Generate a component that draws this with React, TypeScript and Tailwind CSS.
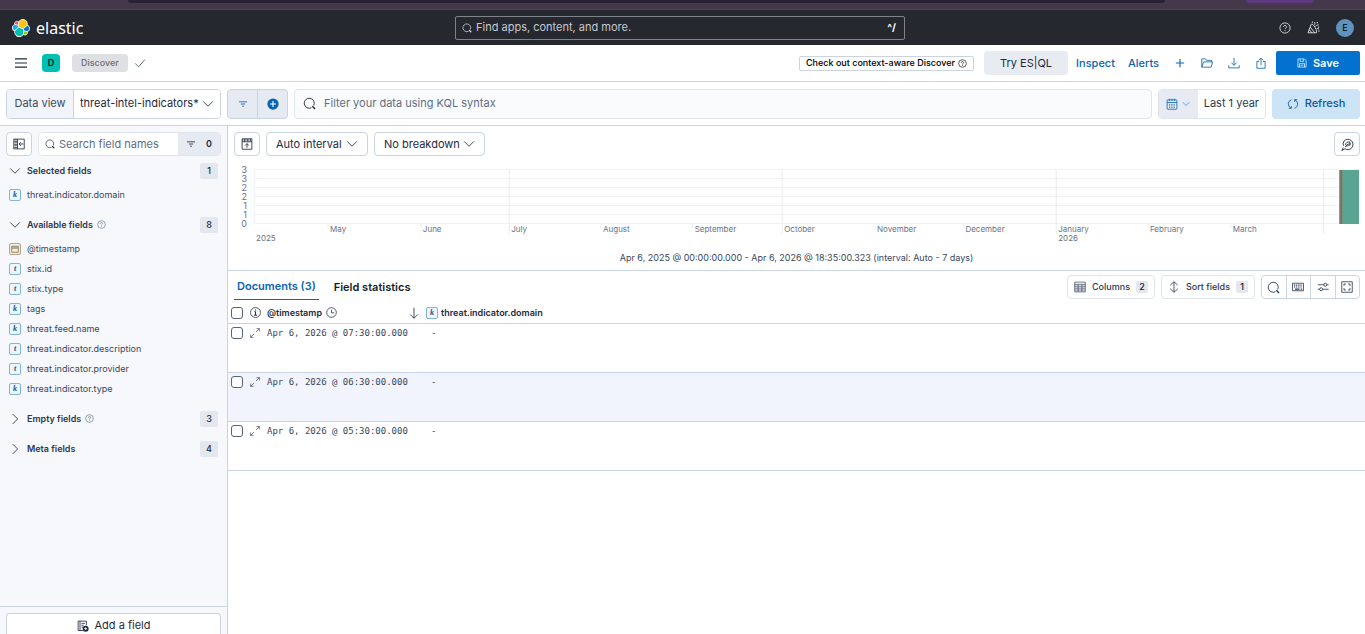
import { useState } from "react";
import type { ReactNode } from "react";

type FieldType = "k" | "t" | "date";

interface Field {
  name: string;
  type: FieldType;
}

const selectedFields: Field[] = [{ name: "threat.indicator.domain", type: "k" }];

const availableFields: Field[] = [
  { name: "@timestamp", type: "date" },
  { name: "stix.id", type: "t" },
  { name: "stix.type", type: "t" },
  { name: "tags", type: "k" },
  { name: "threat.feed.name", type: "k" },
  { name: "threat.indicator.description", type: "t" },
  { name: "threat.indicator.provider", type: "t" },
  { name: "threat.indicator.type", type: "k" },
];

const rows = [
  { timestamp: "Apr 6, 2026 @ 07:30:00.000", domain: "-" },
  { timestamp: "Apr 6, 2026 @ 06:30:00.000", domain: "-" },
  { timestamp: "Apr 6, 2026 @ 05:30:00.000", domain: "-" },
];

// x is the share of the time range, in percent
const months = [
  { x: 6.7, label: "May" },
  { x: 15.1, label: "June" },
  { x: 23.1, label: "July", quarter: true },
  { x: 31.4, label: "August" },
  { x: 39.7, label: "September" },
  { x: 47.8, label: "October", quarter: true },
  { x: 56.2, label: "November" },
  { x: 64.2, label: "December" },
  { x: 72.6, label: "January", year: "2026", quarter: true },
  { x: 80.9, label: "February" },
  { x: 88.4, label: "March" },
  { x: 96.8, label: "", quarter: true },
];

const yTicks = ["3", "3", "2", "2", "1", "1", "0"];

const Icon = ({ className = "size-3", children }: { className?: string; children: ReactNode }) => (
  <svg viewBox="0 0 16 16" fill="none" stroke="currentColor" strokeWidth="1.1" className={`shrink-0 ${className}`} aria-hidden="true">
    {children}
  </svg>
);

const ChevronDown = ({ className }: { className?: string }) => (
  <Icon className={className}><path d="M1.5 4.5 8 11l6.5-6.5" /></Icon>
);

const ChevronRight = ({ className }: { className?: string }) => (
  <Icon className={className}><path d="M5 1.5 11.5 8 5 14.5" /></Icon>
);

const SearchIcon = ({ className }: { className?: string }) => (
  <Icon className={className}>
    <path d="M10.5 13.2A6.2 6.2 0 1 1 13.2 10.5" />
    <path d="m11.5 11.5 3.3 3.3" strokeWidth="1.8" />
  </Icon>
);

const FilterIcon = ({ className }: { className?: string }) => (
  <Icon className={className}><path d="M1.5 4.5h13M4.5 8h7M6.5 11.5h3" strokeWidth="1.3" /></Icon>
);

const HelpIcon = ({ className }: { className?: string }) => (
  <Icon className={className}>
    <circle cx="8" cy="8" r="6.8" />
    <path d="M6 6.5a2 2 0 1 1 3 1.7c-.7.4-1 .7-1 1.5M8 11v1.4" />
  </Icon>
);

const InfoIcon = ({ className }: { className?: string }) => (
  <Icon className={className}>
    <circle cx="8" cy="8" r="7.2" />
    <path d="M6.2 6.8H8v5M5.8 11.8h4.4M8 3.6v1.6" strokeWidth="1.4" />
  </Icon>
);

const ClockIcon = ({ className }: { className?: string }) => (
  <Icon className={className}><circle cx="8" cy="8" r="7" /><path d="M8 4v4.5h4" /></Icon>
);

const CalendarIcon = ({ className }: { className?: string }) => (
  <Icon className={className}>
    <rect x="1.5" y="2.5" width="13" height="12.5" rx="1" />
    <path d="M1.5 6h13M4.5 1v3M8 1v3M11.500 1v3" />
    <path d="M4 8.5h8M4 10.5h8M4 12.5h8" strokeDasharray="1.6 1.4" />
  </Icon>
);

const ElasticLogo = () => (
  <svg viewBox="0 0 32 32" className="size-[18px] shrink-0" aria-hidden="true">
    <path fill="#FFF" d="M32 16.77a6.334 6.334 0 0 0-1.14-3.63 6.269 6.269 0 0 0-3.032-2.308 9.179 9.179 0 0 0-3.69-9.145 9.01 9.01 0 0 0-9.796-.014 9.103 9.103 0 0 0-2.6 2.724 4.8 4.8 0 0 0-7.469 5.406 6.366 6.366 0 0 0-3.081 2.321 6.421 6.421 0 0 0-.04 7.245 6.294 6.294 0 0 0 3.048 2.325 9.11 9.11 0 0 0 3.79 9.17 9.03 9.03 0 0 0 12.33-2.81 4.8 4.8 0 0 0 7.48-5.41 6.36 6.36 0 0 0 4.2-5.874Z" />
    <path fill="#FEC514" d="m12.58 13.787 7.002 3.211 7.066-6.213a7.849 7.849 0 0 0 .152-1.557c0-4.287-3.464-7.761-7.738-7.761a7.723 7.723 0 0 0-6.386 3.38l-1.176 6.11 1.08 2.83Z" />
    <path fill="#00BFB3" d="M5.333 21.228A7.964 7.964 0 0 0 5.181 22.81c0 4.3 3.486 7.787 7.773 7.787a7.76 7.76 0 0 0 6.41-3.395l1.166-6.094-1.556-2.985-7.03-3.21-6.611 6.315Z" />
    <path fill="#F04E98" d="m5.288 9.067 4.8 1.137L11.14 4.73a3.785 3.785 0 0 0-5.852 4.337Z" />
    <path fill="#1BA9F5" d="M4.872 10.214a5.29 5.29 0 0 0-3.595 5.01 5.301 5.301 0 0 0 3.393 4.929l6.733-6.102-1.236-2.65-5.295-1.187Z" />
    <path fill="#93C90E" d="M20.873 27.2a3.75 3.75 0 0 0 2.285.777 3.787 3.787 0 0 0 3.564-5.068l-4.796-1.124-1.053 5.415Z" />
    <path fill="#07C" d="m21.848 20.564 5.28 1.238a5.29 5.29 0 0 0 3.596-5.01 5.297 5.297 0 0 0-3.4-4.924l-6.906 6.065 1.43 2.631Z" />
  </svg>
);

const FieldToken = ({ type }: { type: FieldType }) => {
  if (type === "date") {
    return (
      <span className="flex size-3 shrink-0 items-center justify-center rounded-xs border border-[#b5a488] bg-[#f3eee4] text-[#8a7a5e]">
        <Icon className="size-2"><rect x="1.5" y="2.5" width="13" height="12" strokeWidth="1.8" /><path d="M1.5 6h13" strokeWidth="2.4" /></Icon>
      </span>
    );
  }
  return (
    <span className="flex size-3 shrink-0 items-center justify-center rounded-xs border border-[#84b4de] bg-[#edf5fd] font-['Liberation_Serif',serif] text-[8px] leading-none font-bold text-[#23527f] italic">
      {type}
    </span>
  );
};

const Count = ({ children }: { children: ReactNode }) => (
  <span className="flex h-4 w-[18px] items-center justify-center rounded-xs bg-[#e3e7f0] text-[9px] font-medium text-[#1d2a3e]">
    {children}
  </span>
);

interface FieldGroupProps {
  title: string;
  count: number;
  fields?: Field[];
  help?: boolean;
}

const FieldGroup = ({ title, count, fields, help }: FieldGroupProps) => {
  const [open, setOpen] = useState(!!fields);

  return (
    <section>
      <button type="button" aria-expanded={open} onClick={() => setOpen(!open)} className="flex h-5 w-full items-center text-left">
        {open ? <ChevronDown className="size-3" /> : <ChevronRight className="size-3" />}
        <span className="ml-1.5 text-[9px] font-semibold text-[#2b394f]">{title}</span>
        {help && <HelpIcon className="mb-0.5 ml-1 size-[9px] text-[#5a6d8c]" />}
        <span className="ml-auto"><Count>{count}</Count></span>
      </button>
      {open && fields && (
        <ul className="mt-1">
          {fields.map((field) => (
            <li key={field.name} className="flex h-5 items-center gap-1.5 text-[9px] text-[#3a475c]">
              <FieldToken type={field.type} />
              {field.name}
            </li>
          ))}
        </ul>
      )}
    </section>
  );
};

const HistogramSelect = ({ label, option, className }: { label: string; option: string; className: string }) => (
  <div className={`relative ${className}`}>
    <select aria-label={label} className="block h-6 w-full appearance-none rounded-sm border border-[#cad3e2] bg-white pl-[9px] text-[11px] text-[#1d2a3e]">
      <option>{option}</option>
    </select>
    <ChevronDown className="pointer-events-none absolute top-1.5 right-2.5 size-3" />
  </div>
);

const GlobalHeader = () => (
  <header className="flex h-[35px] shrink-0 items-center bg-[#25282f] pr-[11px] pl-3 text-[#e4e6ea]">
    <div className="flex flex-1 items-center gap-1">
      <ElasticLogo />
      <span className="pl-0.5 font-['Noto_Sans',sans-serif] text-[16px] leading-5 text-white">elastic</span>
    </div>
    <label className="mr-1.5 flex h-6 w-[450px] items-center gap-1 rounded-xs border border-[#80838a] px-1.5 text-[11px]">
      <SearchIcon className="size-2.5" />
      <input type="search" placeholder="Find apps, content, and more." aria-label="Find apps, content, and more." className="min-w-0 flex-1 bg-transparent outline-none placeholder:text-[#c5c8ce]" />
      <span className="pr-0.5 text-[10px] font-bold text-white">^/</span>
    </label>
    <div className="flex flex-1 items-center justify-end gap-4">
      <button type="button" aria-label="Help"><HelpIcon className="size-3" /></button>
      <button type="button" aria-label="What's new">
        <Icon className="size-[13px]">
          <path d="M5.2 4 1.2 14.5h10.300c1 0 .3-3.500-1.500-6.500S5.800 2.800 5.200 4ZM4 7.500l5.500 7M2.800 10.500l3 4M9 5c.8-1 1-2.200.3-3.500M10.500 6.800c1-1.500 2.200-2.200 4-2M12 9.500c1.200-.4 2.200-.2 3 .6" />
          <path d="M6 1.500h1.300M12 2h1.300M13.500 7.500h1.300M14 12.500h1.300" strokeWidth="1.500" />
        </Icon>
      </button>
      <button type="button" aria-label="Account menu" className="flex size-[18px] items-center justify-center rounded-full bg-[#6092c0] text-[9px] text-black">E</button>
    </div>
  </header>
);

const AppMenu = () => (
  <nav className="flex h-[37px] shrink-0 items-center border-b border-[#cad3e2] pr-[5px] pl-[15px]">
    <button type="button" aria-label="Toggle navigation" className="text-[#1d2a3e]">
      <Icon className="size-3"><path d="M0 2.5h16M0 8h16M0 13.5h16" strokeWidth="1.6" /></Icon>
    </button>
    <button type="button" aria-label="Default space" className="ml-[15px] flex size-[18px] items-center justify-center rounded-sm bg-[#00bfb3] text-[9px] font-medium text-black">D</button>
    <a href="#discover" className="ml-3 flex h-[18px] items-center rounded-sm bg-[#dfe0e3] px-[9px] text-[9px] font-medium text-[#6b6f78]">Discover</a>
    <Icon className="ml-1.5 size-3 text-[#3c4a61]"><path d="m1.500 8.5 4.5 4.5 8.5-9.5" /></Icon>

    <div className="ml-auto flex items-center text-[11px] font-medium text-[#0b64b3]">
      <button type="button" className="flex h-[15px] items-center gap-[3px] rounded-xs border border-[#cad3e2] px-1.5 text-[9px] text-black">
        Check out context-aware Discover
        <HelpIcon className="size-[9px]" />
      </button>
      <button type="button" className="ml-2.5 h-6 w-[84px] rounded-sm bg-[#e9ebf3] font-normal text-[#1d2a3e]">Try ES|QL</button>
      <a href="#inspect" className="ml-2">Inspect</a>
      <a href="#alerts" className="ml-[13px]">Alerts</a>
      <div className="mr-[9px] ml-[15px] flex items-center gap-[15px]">
        <button type="button" aria-label="New session">
          <Icon className="size-3"><path d="M8 2.5v11M2.500 8h11" strokeWidth="1.5" /></Icon>
        </button>
        <button type="button" aria-label="Open session">
          <Icon className="size-3"><path d="M1 13.5v-11h5L7.5 4.500H14V6.500M1 13.500 3.500 6.500H15.500L13.500 13.500H1Z" /></Icon>
        </button>
        <button type="button" aria-label="Export">
          <Icon className="size-3"><path d="M8 1v10M4.5 7.500 8 11l3.500-3.500M1 11v3.500h14V11" /></Icon>
        </button>
        <button type="button" aria-label="Share">
          <Icon className="size-3"><path d="M5.500 6h-3v9h11V6h-3M8 11V1.500M5 4.500l3-3 3 3" /></Icon>
        </button>
      </div>
      <button type="button" className="flex h-6 w-[84px] items-center justify-center gap-1.5 rounded-xs bg-[#0272ce] font-semibold text-white">
        <Icon className="size-2.5"><path d="M1.500 1.500h10.500l2.500 2.500v10.500h-13zM5 1.500v4h5.500v-4M4 14.500v-5.500h8v5.500M6 11.500h4" /></Icon>
        Save
      </button>
    </div>
  </nav>
);

const QueryBar = () => (
  <div className="flex h-11 shrink-0 items-center gap-1.5 border-b border-[#cad3e2] pr-[5px] pl-1.5 text-[11px]">
    <div className="flex h-[30px] w-[215px] shrink-0 overflow-hidden rounded-sm border border-[#cad3e2]">
      <label htmlFor="data-view" className="flex w-[67px] items-center justify-center border-r border-[#cad3e2] bg-[#f1f4fb] text-[#3c4a61]">Data view</label>
      <div className="relative flex-1">
        <select id="data-view" className="block h-full w-full appearance-none bg-white pl-1.5 text-[#1d2a3e]">
          <option>threat-intel-indicators*</option>
        </select>
        <ChevronDown className="pointer-events-none absolute top-2 right-1.5 size-3" />
      </div>
    </div>

    <div className="flex h-[30px] w-[61px] shrink-0 divide-x divide-[#cad3e2] rounded-sm border border-[#cad3e2] bg-[#e6eaf3] text-[#0b64b3]">
      <button type="button" aria-label="Filter menu" className="flex flex-1 items-center justify-center"><FilterIcon className="size-2.5" /></button>
      <button type="button" aria-label="Add filter" className="flex flex-1 items-center justify-center">
        <Icon className="size-3"><circle cx="8" cy="8" r="7.5" fill="currentColor" stroke="none" /><path d="M8 4v8M4 8h8" stroke="#fff" strokeWidth="1.5" /></Icon>
      </button>
    </div>

    <label className="flex h-[30px] min-w-0 flex-1 items-center gap-2 rounded-sm border border-[#dfe5ee] bg-[#fafbfd] px-2 text-[#1d2a3e]">
      <SearchIcon className="size-[13px]" />
      <input type="text" aria-label="Filter query" placeholder="Filter your data using KQL syntax" className="min-w-0 flex-1 bg-transparent outline-none placeholder:text-[#5f6d85]" />
    </label>

    <div className="flex h-[30px] shrink-0 overflow-hidden rounded-sm border border-[#dfe5ee] bg-white">
      <button type="button" aria-label="Date quick select" className="flex w-[39px] items-center justify-center gap-1 bg-[#e6eaf3] text-[#0b64b3]">
        <CalendarIcon className="size-3" />
        <ChevronDown className="size-2" />
      </button>
      <button type="button" className="px-1.5 text-[#2b394f]">Last 1 year</button>
    </div>

    <button type="button" className="flex h-[30px] w-[88px] shrink-0 items-center justify-center gap-1.5 rounded-sm bg-[#cce4f6] font-medium text-[#0b57a0]">
      <Icon className="size-3"><path d="M6 2.200A6 6 0 0 0 5.500 13.500M2.500 13.800h3.300v-3M10 13.800A6 6 0 0 0 10.500 2.500M13.500 2.200h-3.300v3" /></Icon>
      Refresh
    </button>
  </div>
);

const Sidebar = () => (
  <aside className="flex w-[228px] shrink-0 flex-col border-r border-[#cad3e2] bg-[#f6f8fc]">
    <div className="flex gap-1.5 px-1.5 pt-1.5">
      <button type="button" aria-label="Hide sidebar" className="flex h-6 w-[26px] items-center justify-center rounded-sm border border-[#cad3e2] bg-white">
        <Icon className="size-3">
          <path d="M1 1.500h14v13H1zM6 1.500v13M14 8H8.500M10.500 5.500 8 8l2.500 2.500" />
          <path d="M3.500 2v12" strokeWidth="3.500" strokeDasharray="1 1" />
        </Icon>
      </button>
      <div className="flex h-6 min-w-0 flex-1 items-center overflow-hidden rounded-sm border border-[#dfe5ee] bg-white text-[11px]">
        <label className="flex min-w-0 flex-1 items-center gap-1 pl-1.5">
          <SearchIcon className="size-2.5" />
          <input type="search" aria-label="Search field names" placeholder="Search field names" className="min-w-0 flex-1 outline-none placeholder:text-[#5f6d85]" />
        </label>
        <button type="button" aria-label="Filter by type" className="flex h-full w-[42px] items-center justify-center gap-2.5 bg-[#e6eaf3] text-[9px] font-semibold">
          <FilterIcon className="size-2.5" />
          0
        </button>
      </div>
    </div>

    <div className="flex min-h-0 flex-1 flex-col gap-2.5 overflow-hidden pt-[5px] pr-[9px] pl-[9px]">
      <FieldGroup title="Selected fields" count={1} fields={selectedFields} />
      <FieldGroup title="Available fields" count={8} fields={availableFields} help />
      <FieldGroup title="Empty fields" count={3} help />
      <FieldGroup title="Meta fields" count={4} />
    </div>

    <div className="h-7 shrink-0 overflow-hidden border-t border-[#cad3e2] px-1.5 pt-1.5">
      <button type="button" className="flex h-6 w-full items-center justify-center gap-1.5 rounded-t-sm border border-b-0 border-[#cad3e2] bg-white text-[11px]">
        <Icon className="size-3">
          <path d="M8 14H1.500V1.500h11V7M4 1.500V14M6 4.500h4.500M6 7h3M6 9.500h2" />
          <circle cx="11.500" cy="11.500" r="4" fill="currentColor" stroke="none" />
          <path d="M11.500 9.500v4M9.500 11.500h4" stroke="#fff" />
        </Icon>
        Add a field
      </button>
    </div>
  </aside>
);

const HistogramChart = () => (
  <div className="mt-2 flex pr-1.5">
    <svg className="h-20 w-[26px] shrink-0 fill-[#6a7384] text-[9px]" aria-hidden="true">
      {yTicks.map((tick, i) => (
        <text key={i} x="19" y={9 + i * 9} textAnchor="end">{tick}</text>
      ))}
    </svg>
    <svg className="h-20 min-w-0 flex-1 overflow-visible fill-[#6a7384] text-[8px]" role="img" aria-label="Histogram of documents over time">
      {yTicks.map((_, i) => (
        <line key={i} x1="0" x2="100%" y1={5.5 + i * 9} y2={5.5 + i * 9} stroke="#eef1f6" />
      ))}
      <line x1="0.5" x2="0.5" y1="6" y2="60" stroke="#eef1f6" />
      {months.map((month) => (
        <g key={month.x}>
          <line x1={`${month.x}%`} x2={`${month.x}%`} y1={month.quarter ? 6 : 60} y2={month.quarter ? 70 : 64} stroke="#e9ecf2" />
          <text x={`${month.x}%`} y="68" dx="2">{month.label}</text>
          {month.year && <text x={`${month.x}%`} y="77" dx="2">{month.year}</text>}
        </g>
      ))}
      <text x="2" y="77">2025</text>
      <rect x="98.2%" y="6" width="1.8%" height="54" fill="#59a592" />
      <rect x="98.3%" y="6" width="2" height="54" fill="#8a6a5b" />
    </svg>
  </div>
);

const Histogram = () => (
  <section className="shrink-0 border-b border-[#cad3e2] pt-1.5 pb-1">
    <div className="flex gap-1.5 pr-[5px] pl-1.5">
      <button type="button" aria-label="Hide chart" className="flex h-6 w-[26px] items-center justify-center rounded-sm border border-[#cad3e2]">
        <Icon className="size-3">
          <path d="M1.500 1h13v14h-13zM1.500 5h13M8 13V7.500M5.500 10 8 7.500l2.500 2.500" />
          <path d="M2 3h12" strokeWidth="3.500" strokeDasharray="1 1" />
        </Icon>
      </button>
      <HistogramSelect label="Time interval" option="Auto interval" className="w-[102px]" />
      <HistogramSelect label="Breakdown" option="No breakdown" className="w-[111px]" />
      <button type="button" aria-label="Edit visualization" className="ml-auto flex h-6 w-[26px] items-center justify-center rounded-sm border border-[#cad3e2]">
        <Icon className="size-[13px]">
          <path d="M4 3.500A6.300 6.300 0 1 1 5 13.200L1 15.500l1.800-3.700M3 9.500A6 6 0 0 1 4 3.500" />
          <path d="M5.500 8.500c.5-3 2.500-4 5.500-3.500-.2 3-1.700 5-4.500 5M5 11l4-4M10.500 9.500l1.500-3" />
        </Icon>
      </button>
    </div>
    <HistogramChart />
    <p className="mt-1.5 text-center text-[9px] leading-4 text-[#3a475c]">
      Apr 6, 2025 @ 00:00:00.000 - Apr 6, 2026 @ 18:35:00.323 (interval: Auto - 7 days)
    </p>
  </section>
);

const GridToolbar = () => (
  <div className="flex h-8 items-center pr-[5px] pl-1.5 text-[11px] font-semibold">
    <div role="tablist" className="flex gap-3">
      <button type="button" role="tab" aria-selected="true" className="h-[26px] border-b border-[#0b64b3] px-[3px] text-[#0b64b3]">Documents (3)</button>
      <button type="button" role="tab" aria-selected="false" className="h-[26px] px-[3px] text-[#111c2c]">Field statistics</button>
    </div>
    <div className="ml-auto flex gap-1.5 text-[9px] font-medium text-[#2b394f]">
      <button type="button" className="flex h-6 w-[88px] items-center justify-center gap-1.5 rounded-sm border border-[#dfe5ee]">
        <Icon className="size-3"><path d="M1 1.500h14v13H1zM1 4.500h14M1 7h14M1 9.500h14M1 12h14M5.500 4.500v10M10.500 4.500v10" strokeWidth="0.9" /></Icon>
        Columns
        <span className="flex h-3 w-3 items-center justify-center rounded-xs bg-[#e3e7f0] text-[#111c2c]">2</span>
      </button>
      <button type="button" className="flex h-6 w-[94px] items-center justify-center gap-1.5 rounded-sm border border-[#dfe5ee]">
        <Icon className="size-3"><path d="M8 1v14M3 5.500l5-4.500 5 4.500M3 10.500l5 4.500 5-4.500" /></Icon>
        Sort fields
        <span className="flex h-3 w-3 items-center justify-center rounded-xs bg-[#e3e7f0] text-[#111c2c]">1</span>
      </button>
      <div className="flex h-6 w-[99px] divide-x divide-[#cad3e2] rounded-sm border border-[#cad3e2]">
        <button type="button" aria-label="Find in table" className="flex flex-1 items-center justify-center"><SearchIcon className="size-[13px]" /></button>
        <button type="button" aria-label="Keyboard shortcuts" className="flex flex-1 items-center justify-center">
          <Icon className="size-3"><path d="M.6 3h14.800v10H.6z" /><path d="M2.500 5.500h11M2.500 8h11" strokeWidth="1.500" strokeDasharray="1.500 1" /><path d="M4 10.800h6M11.500 10.800h2" strokeWidth="1.500" /></Icon>
        </button>
        <button type="button" aria-label="Display options" className="flex flex-1 items-center justify-center">
          <Icon className="size-3"><path d="M1 5h8M13 5h2.500M1 11h2.500M7.500 11h8" /><circle cx="11" cy="5" r="2" /><circle cx="5.500" cy="11" r="2" /></Icon>
        </button>
        <button type="button" aria-label="Enter fullscreen" className="flex flex-1 items-center justify-center">
          <Icon className="size-3"><path d="M1 1h14v14H1zM4 6.500V4h2.500M9.500 4H12v2.500M12 9.500V12H9.500M6.500 12H4V9.500" /></Icon>
        </button>
      </div>
    </div>
  </div>
);

const checkboxClass = "block size-3 appearance-none rounded-[3px] border border-[#5a6475] bg-white checked:bg-[#0b64b3]";

const DocumentTable = () => (
  <table className="w-full table-fixed border-collapse text-left text-[9px]">
    <colgroup>
      <col className="w-[22px]" />
      <col className="w-[17px]" />
      <col className="w-[159px]" />
      <col />
    </colgroup>
    <thead>
      <tr className="h-5 border-b border-[#cad3e2] text-[#1d2a3e]">
        <th className="pl-[3px]"><input type="checkbox" aria-label="Select all rows" className={checkboxClass} /></th>
        <th><InfoIcon className="size-[11px]" /></th>
        <th className="font-semibold">
          <span className="flex items-center gap-1">
            @timestamp
            <ClockIcon className="size-[11px]" />
            <Icon className="mr-1.5 ml-auto size-3"><path d="M8 1v14M3 10l5 5 5-5" /></Icon>
          </span>
        </th>
        <th className="font-semibold">
          <span className="flex items-center gap-[3px]"><FieldToken type="k" />threat.indicator.domain</span>
        </th>
      </tr>
    </thead>
    <tbody>
      {rows.map((row) => (
        <tr key={row.timestamp} className="h-[49px] border-b border-[#cad3e2] align-top font-['DejaVu_Sans_Mono',monospace] leading-3 text-[#3a475c] even:bg-[#f1f4fc]">
          <td className="pt-[3px] pl-[3px]"><input type="checkbox" aria-label={`Select ${row.timestamp}`} className={checkboxClass} /></td>
          <td className="pt-[3px]">
            <button type="button" aria-label="Toggle dialog with details" className="flex h-3 items-center">
              <Icon className="size-2.5"><path d="M9.500 6.500 15 1M10.500 1H15v4.500M6.500 9.500 1 15M1 10.500V15h4.500" /></Icon>
            </button>
          </td>
          <td className="pt-[3px]">{row.timestamp}</td>
          <td className="pt-[3px] pl-[5px]">{row.domain}</td>
        </tr>
      ))}
    </tbody>
  </table>
);

export default function App() {
  return (
    <div className="flex h-screen flex-col overflow-hidden bg-white font-[Inter,sans-serif] text-[#1d2a3e]">
      <div className="flex h-2.5 shrink-0 items-start border-b border-[#4f4653] bg-[#45384a]">
        <div className="ml-[128px] h-[3px] flex-1 rounded-b-md bg-[#2a2333]" />
        <div className="mr-[51px] ml-[81px] h-[3px] w-[68px] rounded-b-md bg-[#5c3a7d]" />
      </div>
      <GlobalHeader />
      <AppMenu />
      <QueryBar />
      <div className="flex min-h-0 flex-1">
        <Sidebar />
        <main className="flex min-w-0 flex-1 flex-col">
          <Histogram />
          <GridToolbar />
          <DocumentTable />
        </main>
      </div>
    </div>
  );
}
